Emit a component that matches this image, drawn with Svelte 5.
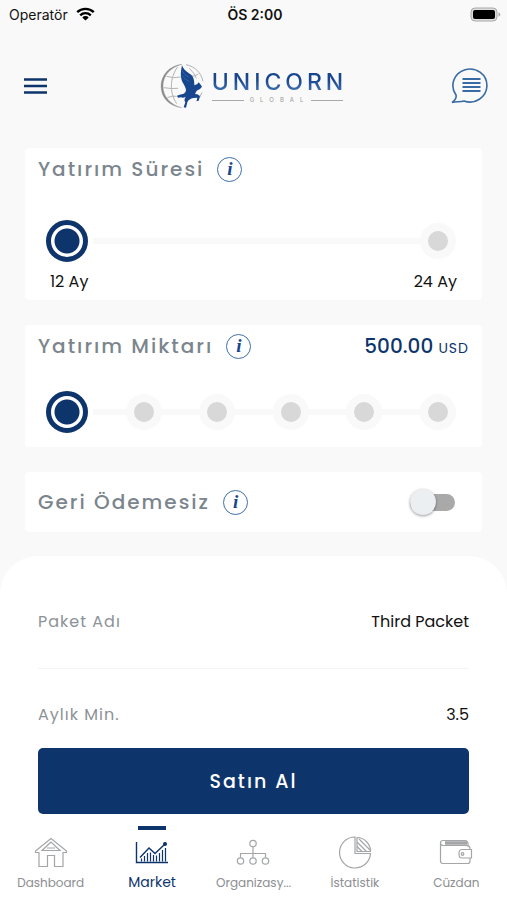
<script lang="ts">
	type Tab = { id: string; label: string };

	const durations = [
		{ value: 12, label: '12 Ay' },
		{ value: 24, label: '24 Ay' }
	];
	const amounts = [500, 1000, 2500, 5000, 10000, 25000];
	const details = [
		{ name: 'Paket Adı', value: 'Third Packet' },
		{ name: 'Aylık Min.', value: '3.5' }
	];
	const tabs: Tab[] = [
		{ id: 'dashboard', label: 'Dashboard' },
		{ id: 'market', label: 'Market' },
		{ id: 'organization', label: 'Organizasy...' },
		{ id: 'stats', label: 'İstatistik' },
		{ id: 'wallet', label: 'Cüzdan' }
	];

	let duration = $state(12);
	let amount = $state(500);
	let nonRefundable = $state(false);
	let activeTab = $state('market');
</script>

<div class="app">
	<div class="status">
		<span class="carrier">
			Operatör
			<svg width="19" height="14" viewBox="0 0 19 14" fill="none" stroke="#000" stroke-width="2.4">
				<path d="M1.2 5.2a12 12 0 0 1 16.6 0M4.2 8.3a7.6 7.6 0 0 1 10.6 0" />
				<path d="M9.5 13.6 6.3 10.4a4.6 4.6 0 0 1 6.4 0z" fill="#000" stroke="none" />
			</svg>
		</span>
		<span class="time">ÖS 2:00</span>
		<svg class="battery" width="31" height="15" viewBox="0 0 31 15">
			<rect x="1" y="1" width="26" height="13" rx="4" fill="#ddd" stroke="#aaa" />
			<rect x="3" y="3" width="22" height="9" rx="2" />
			<path d="M28.5 5.5c2.5.8 2.5 3.2 0 4z" fill="#aaa" />
		</svg>
	</div>

	<header class="topbar">
		<button type="button" class="icon-btn menu" aria-label="Menu">
			<svg width="23" height="18" viewBox="0 0 23 18" stroke="#0e346c" stroke-width="2.6">
				<path d="M0 2.5h23M0 9h23M0 15.5h23" />
			</svg>
		</button>

		<div class="logo">
			<svg width="46" height="46" viewBox="0 0 138 138" fill="none">
				<path d="M66 4C28 8 3 36 3 70c0 34 25 60 62 64C33 126 9 102 9 69 9 37 33 12 66 4z" fill="#8b8b8b" stroke="#8b8b8b" />
				<g stroke="#b3b3b3" stroke-width="3">
					<path d="M53 12C30 42 27 88 50 122M20 40q20 7 42 2M12 74q22 4 42 2M22 104q14-7 28-4" />
					<path d="M78 5c27 5 46 25 51 50M88 16q15 14 21 30M92 40q13 0 23-7M126 88q-5 16-17 27" />
				</g>
				<path
					d="M66 7C61 30 61 46 69 60c5 9 9 15 9 23-2 8-10 11-19 12l-8 3 3 6 9-1c5 2 9 1 14-2-4 8-5 11-1 17l-5 15 7 1 4-16c3-8 10-11 18-13l12-1-2 10 6-1 4-14-8-5-7-1 5-10 10-5 6-7-5-7-5-6-4 5-9 4C103 49 100 39 90 33 76 24 69 17 66 7z"
					fill="#17458e"
				/>
				<path d="M66 24q7 12 20 19M66 37q8 12 22 19" stroke="#4673b1" stroke-width="2" />
			</svg>
			<div class="wordmark">
				<span class="brand">UNICORN</span>
				<span class="sub">GLOBAL</span>
			</div>
		</div>

		<button type="button" class="icon-btn chat" aria-label="Mesajlar">
			<svg width="38" height="36" viewBox="0 0 38 36" fill="none" stroke="#386ba3" stroke-width="1.6">
				<path d="M1 34.5C4.5 32 5.5 29 5 27A17 16.5 0 1 1 13 33C9.500 34 5 33.500 1 34.500z" />
				<path d="M11.5 11h18M11.5 15h18M11.5 19h18M11.5 23h18" stroke-width="1.8" />
			</svg>
		</button>
	</header>

	<main>
		<section class="card">
			<div class="card-head">
				<h2>Yatırım Süresi</h2>
				<button type="button" class="info" aria-label="Yatırım süresi bilgisi">i</button>
			</div>
			<div class="steps" role="radiogroup" aria-label="Yatırım Süresi">
				{#each durations as d}
					<input type="radio" id="duration-{d.value}" name="duration" value={d.value} bind:group={duration} />
				{/each}
			</div>
			<div class="step-labels">
				{#each durations as d}
					<label for="duration-{d.value}">{d.label}</label>
				{/each}
			</div>
		</section>

		<section class="card">
			<div class="card-head">
				<h2>Yatırım Miktarı</h2>
				<button type="button" class="info" aria-label="Yatırım miktarı bilgisi">i</button>
				<p class="amount">{amount.toFixed(2)} <small>USD</small></p>
			</div>
			<div class="steps" role="radiogroup" aria-label="Yatırım Miktarı">
				{#each amounts as a}
					<input type="radio" name="amount" value={a} aria-label="{a} USD" bind:group={amount} />
				{/each}
			</div>
		</section>

		<section class="card card-switch">
			<div class="card-head">
				<h2><label for="non-refundable">Geri Ödemesiz</label></h2>
				<button type="button" class="info" aria-label="Geri ödemesiz bilgisi">i</button>
				<input type="checkbox" id="non-refundable" class="switch" bind:checked={nonRefundable} />
			</div>
		</section>
	</main>

	<section class="sheet">
		<dl>
			{#each details as row}
				<div class="row">
					<dt>{row.name}</dt>
					<dd>{row.value}</dd>
				</div>
			{/each}
		</dl>
		<button type="button" class="buy">Satın Al</button>
	</section>

	<nav>
		{#each tabs as tab}
			<a
				href="#{tab.id}"
				class:active={activeTab === tab.id}
				aria-current={activeTab === tab.id ? 'page' : undefined}
				onclick={() => (activeTab = tab.id)}
			>
				<svg width="34" height="34" viewBox="0 0 34 34" fill="none" stroke="currentColor" stroke-width="1.2">
					{#if tab.id === 'dashboard'}
						<path d="M17 2.5 1.5 15v1.5H5V30.5h8.5V19.5h7V30.5H29V16.5h3.5V15z" />
						<path d="M17 6 8 14.5h18zM13 12h8" />
					{:else if tab.id === 'market'}
						<path d="M1.5 6v20.5H33" stroke-width="1.4" />
						<path d="M5 21.5 14 12l6 5.5L29 9" stroke-width="1.4" />
						<path d="M6.5 22.5v3M9.5 20v5.5M12.5 17v8.5M15.5 16.5v9M18.5 19v6.5M21.5 19.5v6M24.5 17v8.5M27.5 14v11.5M30.5 12v13.5" />
						<circle cx="30" cy="8" r="1.4" fill="currentColor" />
					{:else if tab.id === 'organization'}
						<circle cx="17" cy="7.5" r="3.2" />
						<circle cx="4.5" cy="25" r="3.2" />
						<circle cx="17" cy="25" r="3.2" />
						<circle cx="29.5" cy="25" r="3.2" />
						<path d="M17 11v10.5M4.5 21.5v-4h25v4" />
					{:else if tab.id === 'stats'}
						<path d="M17 1A15.5 15.5 0 1 0 32.5 17.5H17z" />
						<path d="M19 1.5V15.5H32.5A14 14 0 0 0 19 1.5z" />
						<path d="M19 6l9.5 9.5M19 10.5l5 5M21 3l11 11" />
					{:else}
						<path d="M29 11V8.5q0-4-3-4H4Q1.5 4.5 1.5 7q0 2.5 3 2.5H28q3 0 3 3V14M31 22v3q0 2.5-2.5 2.5H4Q1.5 27.5 1.5 25V7" />
						<path d="M6 7h22" stroke-width="3.5" />
						<path d="M32.5 13.5H23q-3 0-3 4v1q0 3.5 3 3.5h9.5z" />
						<circle cx="23.5" cy="18" r="1.3" />
					{/if}
				</svg>
				<span>{tab.label}</span>
			</a>
		{/each}
	</nav>
</div>

<style>
	:global(body) {
		background: #f9f9f9;
	}
	.app {
		font-family: Poppins, Inter, 'Noto Sans', sans-serif;
		color: #111;
		font-size: 16px;
	}
	button {
		font-family: inherit;
		cursor: pointer;
	}
	.status {
		display: grid;
		grid-template-columns: 1fr auto 1fr;
		align-items: center;
		height: 28px;
		padding: 0 6px 0 9px;
		font-family: Inter, sans-serif;
		font-size: 14px;
	}
	.carrier {
		display: flex;
		align-items: center;
		gap: 8px;
	}
	.time {
		font-weight: 600;
	}
	.battery {
		justify-self: end;
	}
	.topbar {
		display: grid;
		grid-template-columns: 1fr auto 1fr;
		align-items: center;
		height: 116px;
		padding: 0 18px;
	}
	.icon-btn {
		display: flex;
		padding: 0;
		border: none;
		background: none;
	}
	.menu {
		justify-self: start;
		margin-left: 6px;
	}
	.chat {
		justify-self: end;
	}
	.logo {
		display: flex;
		align-items: center;
		gap: 6px;
	}
	.wordmark {
		display: flex;
		flex-direction: column;
	}
	.brand {
		font-family: Inter, sans-serif;
		font-size: 23px;
		font-weight: 500;
		line-height: 28px;
		letter-spacing: 4px;
		background: linear-gradient(#17458e 40%, #4f80be);
		background-clip: text;
		color: transparent;
	}
	.sub {
		display: flex;
		align-items: center;
		gap: 6px;
		margin-right: 4px;
		font-family: Inter, sans-serif;
		font-size: 6px;
		line-height: 8px;
		letter-spacing: 6px;
		color: #999;
	}
	.sub::before,
	.sub::after {
		content: '';
		flex: 1;
		height: 1px;
		background: #aaa;
	}
	.sub::after {
		margin-left: -4px;
	}
	main {
		display: flex;
		flex-direction: column;
		gap: 25px;
		padding: 4px 25px 24px;
	}
	.card {
		background: #fff;
		border-radius: 4px;
	}
	.card-head {
		display: flex;
		align-items: center;
		gap: 13px;
		height: 42px;
		padding: 0 13px;
	}
	.card-switch .card-head {
		height: 60px;
	}
	h2 {
		margin: 0;
		font-size: 20px;
		font-weight: 500;
		letter-spacing: 2px;
		color: #7b858d;
	}
	.info {
		width: 25px;
		height: 25px;
		padding: 0;
		border: 1px solid #3f70aa;
		border-radius: 50%;
		background: none;
		color: #17458e;
		font: italic bold 19px/22px 'Liberation Serif', serif;
	}
	.amount {
		margin: 0 0 0 auto;
		font-size: 20px;
		font-weight: 500;
		color: #0e346c;
	}
	.amount small {
		font-size: 14px;
		font-weight: 400;
		letter-spacing: 1px;
	}
	.steps {
		display: flex;
		align-items: center;
		justify-content: space-between;
		height: 42px;
		margin: 24px 26px 0 21px;
		padding-bottom: 14px;
		background: linear-gradient(#f9f9f9, #f9f9f9) 20px 18px / calc(100% - 40px) 6px no-repeat;
	}
	.steps:has(+ .step-labels) {
		margin-top: 30px;
		padding-bottom: 8px;
	}
	.steps input {
		appearance: none;
		width: 36px;
		height: 36px;
		margin: 0;
		border: 8px solid #f9f9f9;
		border-radius: 50%;
		background: #d8d8d8;
		cursor: pointer;
	}
	.steps input:checked {
		width: 42px;
		height: 42px;
		border: 5px solid #0e346c;
		background: radial-gradient(circle, #0e346c 12px, #fff 13px);
		box-shadow: 0 0 0 5px #fff;
	}
	.step-labels {
		display: flex;
		justify-content: space-between;
		padding: 0 25px 6px;
		line-height: 24px;
	}
	.switch {
		appearance: none;
		display: flex;
		align-items: center;
		width: 45px;
		height: 17px;
		margin: 0 14px 0 auto;
		border-radius: 9px;
		background: #a9a9a9;
		cursor: pointer;
	}
	.switch::before {
		content: '';
		flex: none;
		width: 26px;
		height: 26px;
		border-radius: 50%;
		background: #eceff1;
		box-shadow: 0 1px 3px rgba(0, 0, 0, 0.4);
	}
	.switch:checked {
		justify-content: flex-end;
		background: #0e346c;
	}
	.sheet {
		padding: 20px 38px 12px;
		border-radius: 38px 38px 0 0;
		background: #fff;
	}
	dl {
		margin: 0;
	}
	.row {
		display: flex;
		justify-content: space-between;
		padding: 34px 0;
		line-height: 24px;
	}
	.row + .row {
		padding-bottom: 21px;
		border-top: 1px solid #f4f4f4;
	}
	dt {
		letter-spacing: 1px;
		color: #8c9297;
	}
	dd {
		margin: 0;
	}
	.buy {
		display: block;
		width: 100%;
		height: 66px;
		border: none;
		border-radius: 5px;
		background: #0e346c;
		color: #fff;
		font-size: 19px;
		font-weight: 500;
		letter-spacing: 2px;
	}
	nav {
		display: grid;
		grid-template-columns: repeat(5, 1fr);
		height: 74px;
		background: #fff;
	}
	nav a {
		display: flex;
		flex-direction: column;
		align-items: center;
		color: #a3a5a7;
		font-size: 12px;
		line-height: 26px;
		text-decoration: none;
	}
	nav a::before {
		content: '';
		width: 28px;
		height: 4px;
		margin-bottom: 6px;
	}
	nav a span {
		color: #8c8e90;
	}
	nav .active,
	nav .active span {
		color: #0e346c;
		font-size: 14px;
		line-height: 24px;
	}
	nav .active::before {
		background: #0e346c;
	}
</style>
